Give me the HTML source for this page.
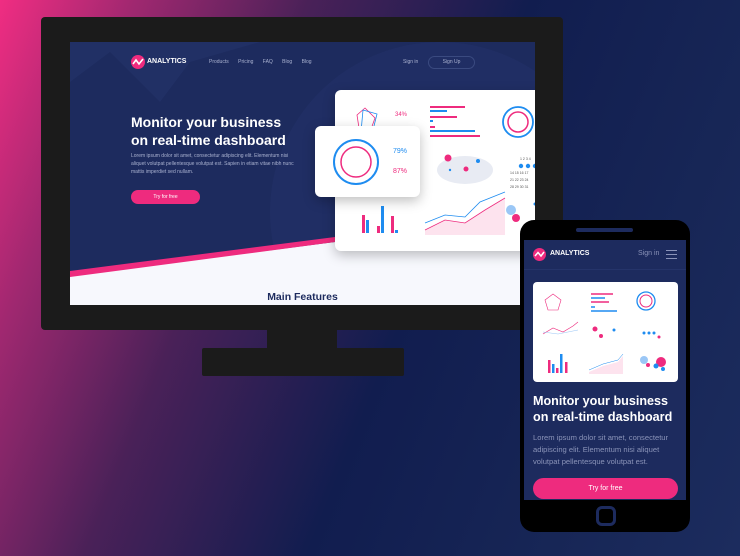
<!DOCTYPE html>
<html><head><meta charset="utf-8"><style>
*{margin:0;padding:0;box-sizing:border-box}
body{width:740px;height:556px;overflow:hidden;position:relative;font-family:"Liberation Sans",sans-serif;
background:linear-gradient(112deg,#f02d82 0%,#a02870 14%,#4a2158 32%,#111d4f 55%,#172656 80%,#1c2c5e 100%);}
.abs{position:absolute}
.mon{left:41px;top:17px;width:522px;height:313px;background:#1b1b1b;border-radius:4px}
.scr{left:70px;top:42px;width:465px;height:263px;background:#1d2b5e;overflow:hidden}
.neck{left:267px;top:330px;width:70px;height:20px;background:#1b1b1b}
.base{left:202px;top:348px;width:202px;height:28px;background:#1b1b1b;border-radius:2px}
.w{color:#fff}
.card{background:#fff;border-radius:6px;box-shadow:0 4px 12px rgba(0,0,0,.25)}
.phone{left:520px;top:220px;width:170px;height:312px;background:#000;border-radius:14px}
.ps{left:524px;top:240px;width:162px;height:260px;background:#1d2b5e;overflow:hidden}
</style></head><body>
<div class="abs mon"></div>
<div class="abs scr">
  <svg class="abs" style="left:0;top:0" width="465" height="263">
    <path d="M0 40 L40 10 L90 60 L120 20 L190 0 L0 0Z" fill="#24336a" opacity=".6"/>
    <circle cx="370" cy="170" r="170" fill="#23316a" opacity=".5"/>
    <polygon points="0,234 265,200 465,170 465,263 0,263" fill="#f7f8fd"/>
    <polygon points="0,229 265,195 265,200 0,235" fill="#ee2b7e"/>
  </svg>
  <svg class="abs" style="left:61px;top:13px" width="14" height="14"><circle cx="7" cy="7" r="7" fill="#ee2b7e"/><path d="M2 9 L5 5 L8 9 L12 4" stroke="#fff" stroke-width="1.6" fill="none"/></svg>
  <div class="abs w" style="left:77px;top:16px;font-size:7px;font-weight:bold">ANALYTICS</div>
  <div class="abs" style="left:139px;top:17px;font-size:5px;color:#aab2d0;word-spacing:8px">Products Pricing FAQ Blog Blog</div>
  <div class="abs" style="left:333px;top:17px;font-size:5px;color:#aab2d0">Sign in</div>
  <div class="abs" style="left:358px;top:14px;width:47px;height:13px;border:1px solid #3a4a80;border-radius:7px;font-size:5px;color:#aab2d0;text-align:center;line-height:11px">Sign Up</div>
  <div class="abs w" style="left:61px;top:71px;font-size:14px;font-weight:bold;line-height:18px">Monitor your business<br>on real-time dashboard</div>
  <div class="abs" style="left:61px;top:110px;font-size:5px;color:#aab2d0;line-height:8px;width:165px">Lorem ipsum dolor sit amet, consectetur adipiscing elit. Elementum nisi aliquet volutpat pellentesque volutpat est. Sapien in etiam vitae nibh nunc mattis imperdiet sed nullam.</div>
  <div class="abs w" style="left:61px;top:148px;width:69px;height:14px;background:#ee2b7e;border-radius:7px;font-size:5px;text-align:center;line-height:14px">Try for free</div>
  <div class="abs" style="left:0;top:249px;width:465px;text-align:center;font-size:10.5px;font-weight:bold;color:#1d2b5e">Main Features</div>
  <div class="abs card" style="left:265px;top:48px;width:220px;height:161px">
    <svg width="220" height="161">
      <polygon points="30,18 40,28 35,42 24,38 22,25" fill="none" stroke="#ee2b7e" stroke-width=".8"/>
      <polygon points="28,20 42,24 38,40 26,42" fill="none" stroke="#1e8cf0" stroke-width=".8"/>
      <text x="60" y="26" font-size="6" fill="#ee2b7e" font-family="Liberation Sans">34%</text>
      <g stroke-width="2"><line x1="95" y1="17" x2="130" y2="17" stroke="#ee2b7e"/><line x1="95" y1="21" x2="112" y2="21" stroke="#1e8cf0"/><line x1="95" y1="27" x2="122" y2="27" stroke="#ee2b7e"/><line x1="95" y1="31" x2="98" y2="31" stroke="#1e8cf0"/><line x1="95" y1="37" x2="100" y2="37" stroke="#ee2b7e"/><line x1="95" y1="41" x2="140" y2="41" stroke="#1e8cf0"/><line x1="95" y1="46" x2="145" y2="46" stroke="#ee2b7e"/></g>
      <circle cx="183" cy="32" r="15" fill="none" stroke="#1e8cf0" stroke-width="1.8"/>
      <circle cx="183" cy="32" r="10" fill="none" stroke="#ee2b7e" stroke-width="1.5"/>
      <g fill="#e8ebf3"><ellipse cx="130" cy="80" rx="28" ry="14"/></g>
      <circle cx="113" cy="68" r="3.5" fill="#ee2b7e"/><circle cx="131" cy="79" r="2.5" fill="#ee2b7e"/><circle cx="143" cy="71" r="2" fill="#1e8cf0"/><circle cx="115" cy="80" r="1.2" fill="#1e8cf0"/>
      <g fill="#1e8cf0"><circle cx="186" cy="76" r="2.2"/><circle cx="193" cy="76" r="2.2"/><circle cx="200" cy="76" r="2.2"/></g><circle cx="206" cy="82" r="2.2" fill="#ee2b7e"/>
      <g font-size="3.5" fill="#555" font-family="Liberation Sans"><text x="185" y="70">1 2 3 4</text><text x="175" y="84">14 15 16 17</text><text x="175" y="91">21 22 23 24</text><text x="175" y="98">28 29 30 31</text></g>
      <g><rect x="27" y="125" width="3" height="18" fill="#ee2b7e"/><rect x="31" y="130" width="3" height="13" fill="#1e8cf0"/><rect x="42" y="136" width="3" height="7" fill="#ee2b7e"/><rect x="46" y="116" width="3" height="27" fill="#1e8cf0"/><rect x="56" y="126" width="3" height="17" fill="#ee2b7e"/><rect x="60" y="140" width="3" height="3" fill="#1e8cf0"/></g>
      <path d="M90 140 L110 130 L130 133 L150 120 L170 108 V145 H90Z" fill="#fde3ee"/>
      <polyline points="90,140 110,130 130,133 150,120 170,108" fill="none" stroke="#ee2b7e" stroke-width=".8"/>
      <polyline points="90,133 110,125 130,127 145,112 170,102" fill="none" stroke="#1e8cf0" stroke-width=".8"/>
      <circle cx="176" cy="120" r="5" fill="#9bc7f6"/><circle cx="181" cy="128" r="4" fill="#ee2b7e"/><circle cx="200" cy="114" r="1.5" fill="#1e8cf0"/>
    </svg>
  </div>
  <div class="abs card" style="left:245px;top:84px;width:105px;height:71px">
    <svg width="105" height="71">
      <circle cx="41" cy="36" r="22" fill="none" stroke="#1e8cf0" stroke-width="2"/>
      <circle cx="41" cy="36" r="15" fill="none" stroke="#ee2b7e" stroke-width="1.5"/>
      <text x="78" y="27" font-size="7" fill="#1e8cf0" font-family="Liberation Sans">79%</text>
      <text x="78" y="47" font-size="7" fill="#ee2b7e" font-family="Liberation Sans">87%</text>
    </svg>
  </div>
</div>
<div class="abs neck"></div><div class="abs base"></div>
<div class="abs phone"></div>
<div class="abs" style="left:576px;top:228px;width:57px;height:4px;background:#1d2b5e;border-radius:2px"></div>
<div class="abs" style="left:596px;top:506px;width:20px;height:20px;border:3px solid #1d2b5e;border-radius:6px"></div>
<div class="abs ps">
  <div class="abs" style="left:0;top:0;width:162px;height:30px;background:#1d2b5e;border-bottom:1px solid #25346a"></div>
  <svg class="abs" style="left:9px;top:8px" width="13" height="13"><circle cx="6.5" cy="6.5" r="6.5" fill="#ee2b7e"/><path d="M2 8 L5 4.5 L8 8 L11 4" stroke="#fff" stroke-width="1.5" fill="none"/></svg>
  <div class="abs w" style="left:26px;top:10px;font-size:7px;font-weight:bold">ANALYTICS</div>
  <div class="abs" style="left:114px;top:10px;font-size:7px;color:#8a93b8">Sign in</div>
  <div class="abs" style="left:142px;top:10px;width:11px;height:9px;border-top:1.5px solid #8a93b8;border-bottom:1.5px solid #8a93b8"><div style="margin-top:2.5px;height:1.5px;background:#8a93b8"></div></div>
  <div class="abs" style="left:9px;top:42px;width:145px;height:100px;background:#fff;border-radius:4px">
    <svg width="145" height="100">
      <polygon points="20,12 28,18 25,28 15,28 12,18" fill="none" stroke="#ee2b7e" stroke-width=".6"/>
      <g stroke-width="1.5"><line x1="58" y1="12" x2="80" y2="12" stroke="#ee2b7e"/><line x1="58" y1="16" x2="72" y2="16" stroke="#1e8cf0"/><line x1="58" y1="20" x2="76" y2="20" stroke="#ee2b7e"/><line x1="58" y1="25" x2="62" y2="25" stroke="#1e8cf0"/><line x1="58" y1="29" x2="84" y2="29" stroke="#1e8cf0"/></g>
      <circle cx="113" cy="19" r="9" fill="none" stroke="#1e8cf0" stroke-width="1.3"/><circle cx="113" cy="19" r="6" fill="none" stroke="#ee2b7e" stroke-width="1"/>
      <polyline points="10,52 20,46 30,50 40,44 45,40" fill="none" stroke="#ee2b7e" stroke-width=".6"/>
      <polyline points="10,50 25,52 45,48" fill="none" stroke="#9bc7f6" stroke-width=".6"/>
      <circle cx="62" cy="47" r="2.5" fill="#ee2b7e"/><circle cx="68" cy="54" r="2" fill="#ee2b7e"/><circle cx="81" cy="48" r="1.5" fill="#1e8cf0"/>
      <g fill="#1e8cf0"><circle cx="111" cy="51" r="1.5"/><circle cx="116" cy="51" r="1.5"/><circle cx="121" cy="51" r="1.5"/></g><circle cx="126" cy="55" r="1.5" fill="#ee2b7e"/>
      <rect x="15" y="78" width="2.5" height="13" fill="#ee2b7e"/><rect x="19" y="82" width="2.5" height="9" fill="#1e8cf0"/><rect x="23" y="86" width="2.5" height="5" fill="#ee2b7e"/><rect x="27" y="72" width="2.5" height="19" fill="#1e8cf0"/><rect x="32" y="80" width="2.5" height="11" fill="#ee2b7e"/>
      <path d="M56 90 L70 84 L85 80 L90 74 V92 H56Z" fill="#fde3ee"/><polyline points="56,88 70,82 85,78 90,72" fill="none" stroke="#1e8cf0" stroke-width=".5"/>
      <circle cx="111" cy="78" r="4" fill="#9bc7f6"/><circle cx="128" cy="80" r="5" fill="#ee2b7e"/><circle cx="115" cy="83" r="2" fill="#ee2b7e"/><circle cx="130" cy="87" r="2" fill="#1e8cf0"/><circle cx="123" cy="84" r="2.5" fill="#1e8cf0"/>
    </svg>
  </div>
  <div class="abs w" style="left:9px;top:153px;font-size:12.6px;font-weight:bold;line-height:16px;white-space:nowrap">Monitor your business<br>on real-time dashboard</div>
  <div class="abs" style="left:9px;top:192px;font-size:7.6px;color:#8a93b8;line-height:12px;white-space:nowrap">Lorem ipsum dolor sit amet, consectetur<br>adipiscing elit. Elementum nisi aliquet<br>volutpat pellentesque volutpat est.</div>
  <div class="abs w" style="left:9px;top:238px;width:145px;height:21px;background:#ee2b7e;border-radius:11px;font-size:7px;text-align:center;line-height:21px">Try for free</div>
</div>
</body></html>
